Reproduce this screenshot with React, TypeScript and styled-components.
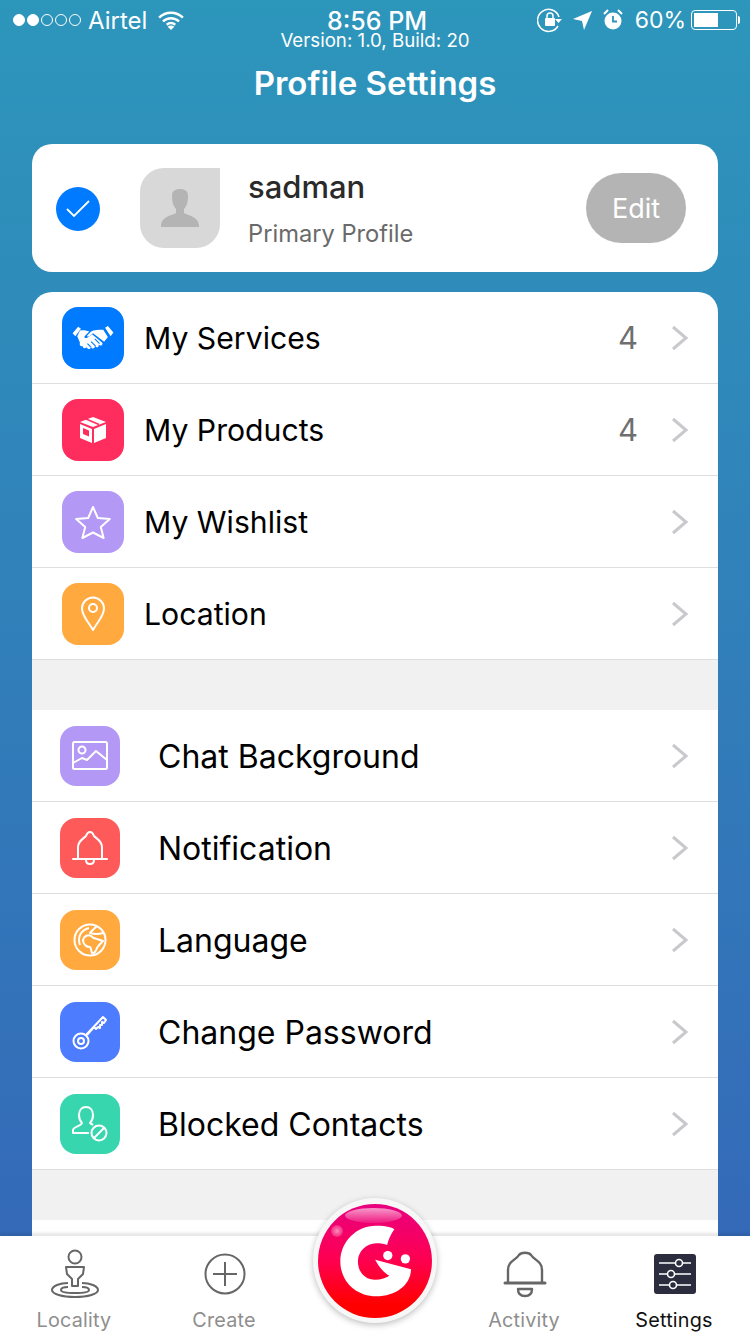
import React from 'react';
import styled, { createGlobalStyle } from 'styled-components';

const GlobalStyle = createGlobalStyle`
  html, body {
    margin: 0;
    padding: 0;
    background: #3566b8;
  }
  * {
    box-sizing: border-box;
  }
`;

const group1 = [
  { label: 'My Services', color: '#007aff', count: 4, icon: 'hands' },
  { label: 'My Products', color: '#ff2d5e', count: 4, icon: 'box' },
  { label: 'My Wishlist', color: '#b398f5', icon: 'star' },
  { label: 'Location', color: '#ffa93f', icon: 'pin' },
];

const group2 = [
  { label: 'Chat Background', color: '#b398f5', icon: 'image' },
  { label: 'Notification', color: '#ff5a5a', icon: 'bell' },
  { label: 'Language', color: '#ffa93f', icon: 'globe' },
  { label: 'Change Password', color: '#4e7cff', icon: 'key' },
  { label: 'Blocked Contacts', color: '#38d6ae', icon: 'blocked' },
];

const RowGlyph = ({ name }: { name: string }) => {
  switch (name) {
    case 'hands':
      return (
        <svg width="42" height="26" viewBox="0 0 44 28" fill="none">
          <path d="M0 9l6-7 3 2-6 8z M44 8l-6-7-3 2 6 9z" fill="#fff" />
          <path d="M8 6c4-1 7 0 10 1l-5 5c-1 2 2 3 4 1l4-3 11 9c1 3-2 4-4 2 1 3-2 4-4 2 0 3-3 3-4 1-1 3-4 2-5 0-2 2-4 1-4-1-3 0-4-2-3-4L5 12z" fill="#fff" />
          <path d="M20 7c3-2 8-2 13-2l5 8-4 5-12-9-4 3c-2 1-3 0-2-1z" fill="#fff" />
          <path d="M16 20l4 4M20 18l5 5M24 15l5 5" stroke="#007aff" strokeWidth="1.200" />
        </svg>
      );
    case 'box':
      return (
        <svg width="28" height="28" viewBox="0 0 28 28" fill="none">
          <path d="M14 1l13 5-13 5L1 6z" fill="#fff" />
          <path d="M7 3l13 5.500" stroke="#ff2d5e" strokeWidth="1.500" />
          <path d="M1 8l12 5v14L1 22z M15 13l12-5v14l-12 5z" fill="#fff" />
          <path d="M4 12l6 2.500v6L4 18z" fill="#ff2d5e" />
        </svg>
      );
    case 'star':
      return (
        <svg width="36" height="34" viewBox="0 0 36 34" fill="none" stroke="#fff" strokeWidth="2" strokeLinejoin="round">
          <path d="M18 2l4.800 11 12 1-9 8 2.800 11L18 27.500 7.400 33 10.200 22l-9-8 12-1z" />
        </svg>
      );
    case 'pin':
      return (
        <svg width="26" height="36" viewBox="0 0 26 36" fill="none" stroke="#fff" strokeWidth="2">
          <path d="M13 34C8 25 2 20 2 12.500a11 11 0 0 1 22 0C24 20 18 25 13 34z" strokeLinejoin="round" />
          <circle cx="13" cy="12" r="4" />
        </svg>
      );
    case 'image':
      return (
        <svg width="36" height="30" viewBox="0 0 36 30" fill="none" stroke="#fff" strokeWidth="2" strokeLinejoin="round">
          <rect x="1" y="1" width="34" height="27" rx="1.500" />
          <circle cx="10" cy="9" r="3.500" />
          <path d="M1 22l9-5 5 2 9-9 11 9" />
        </svg>
      );
    case 'bell':
      return (
        <svg width="36" height="36" viewBox="0 0 36 36" fill="none" stroke="#fff" strokeWidth="2" strokeLinejoin="round">
          <path d="M6 29V17C6 11 11 9 14 6c1-3 3-4 4-4s3 1 4 4c3 3 8 5 8 11v12" />
          <path d="M1 29h34" strokeLinecap="round" />
          <path d="M14 30c0 3 2 4 4 4s4-1 4-4" />
        </svg>
      );
    case 'globe':
      return (
        <svg width="34" height="34" viewBox="0 0 34 34" fill="none" stroke="#fff" strokeWidth="2" strokeLinejoin="round">
          <circle cx="17" cy="17" r="15.500" />
          <path d="M7 22C4 14 8 7 16 5" />
          <path d="M10 17C11 13 15 11 18 13C20 15 21 16 24 16L30 18C27 21 25 23 24 25C23 28 21 31 19 30C18 27 18 25 17 24C14 24 10 22 10 17Z" />
          <path d="M24 3C21 6 18 8 17 10C20 11 24 12 30 10" />
        </svg>
      );
    case 'key':
      return (
        <svg width="36" height="36" viewBox="0 0 36 36" fill="none" stroke="#fff" strokeWidth="2" strokeLinejoin="round">
          <circle cx="9" cy="27" r="7.500" />
          <circle cx="9" cy="27" r="3" />
          <path d="M14 21L31 3l3 3-2 3-2-1 0 3-2 0 0 3-2-1-2 2-2-2-7 8" />
        </svg>
      );
    case 'blocked':
      return (
        <svg width="36" height="36" viewBox="0 0 36 36" fill="none" stroke="#fff" strokeWidth="2" strokeLinejoin="round">
          <path d="M17 27H1v-3c0-3 8-4 9-7-2-2-3-5-3-8 0-5 3-8 7-8s7 3 7 8c0 3-1 6-3 8 1 1 2 1 3 2" />
          <circle cx="27" cy="27" r="7.500" />
          <path d="M22 32L32 22" />
        </svg>
      );
    default:
      return null;
  }
};

const Chevron = () => (
  <svg width="18" height="26" viewBox="0 0 18 26" fill="none">
    <path d="M2 2l13 11L2 24" stroke="#c9c9cd" strokeWidth="3" />
  </svg>
);

const App = () => {
  return (
    <>
      <GlobalStyle />
      <Page>
        <StatusBar>
          <StatusLeft>
            <Signal>
              <Dot $on />
              <Dot $on />
              <Dot />
              <Dot />
              <Dot />
            </Signal>
            <Carrier>Airtel</Carrier>
            <svg width="26" height="19" viewBox="0 0 27 20" fill="none">
              <path d="M1 7c7-7 18-7 25 0M5 11c5-4.500 12-4.500 17 0M9 14.500c3-2.500 6-2.500 9 0" stroke="#fff" strokeWidth="2.600" />
              <path d="M13.500 20l-3.500-3.500c2-1.500 5-1.500 7 0z" fill="#fff" />
            </svg>
          </StatusLeft>
          <Clock>8:56 PM</Clock>
          <StatusRight>
            <svg width="26" height="26" viewBox="0 0 26 26" fill="none">
              <path d="M21 19a11 11 0 1 1 1-9" stroke="#fff" strokeWidth="1.500" />
              <path d="M18 12h7l-3.500 4z" fill="#fff" />
              <rect x="8" y="11" width="10" height="8" rx="1" fill="#fff" />
              <path d="M10 11V9a3 3 0 0 1 6 0v2" stroke="#fff" strokeWidth="1.500" />
            </svg>
            <svg width="20" height="20" viewBox="0 0 20 20">
              <path d="M19 1L0 9l9 2 2 9z" fill="#fff" />
            </svg>
            <svg width="20" height="22" viewBox="0 0 20 22" fill="none">
              <circle cx="10" cy="12" r="8.500" fill="#fff" />
              <path d="M10 7v5.500h4" stroke="#2d92bb" strokeWidth="1.800" />
              <path d="M1 5l4-4M19 5l-4-4" stroke="#fff" strokeWidth="2" />
            </svg>
            <BatteryText>60%</BatteryText>
            <Battery>
              <BatteryFill style={{ width: '60%' }} />
            </Battery>
          </StatusRight>
        </StatusBar>
        <Version>Version: 1.0, Build: 20</Version>
        <Title>Profile Settings</Title>

        <ProfileCard>
          <CheckCircle>
            <svg width="26" height="20" viewBox="0 0 26 20" fill="none">
              <path d="M2 10l7 7L24 2" stroke="#fff" strokeWidth="1.800" />
            </svg>
          </CheckCircle>
          <Avatar>
            <svg width="40" height="40" viewBox="0 0 40 40">
              <path d="M12 8c0-5 3-7 8-7s8 2 8 7c0 5-1 10-4 13v4c2 2 15 3 15 13v1H1v-1c0-10 13-11 15-13v-4c-3-3-4-8-4-13z" fill="#b4b4b4" />
            </svg>
          </Avatar>
          <ProfileText>
            <ProfileName>sadman</ProfileName>
            <ProfileRole>Primary Profile</ProfileRole>
          </ProfileText>
          <EditButton>Edit</EditButton>
        </ProfileCard>

        <ListCard>
          {group1.map((item) => (
            <Row key={item.label} $indent={30}>
              <IconTile $color={item.color} $size={62}>
                <RowGlyph name={item.icon} />
              </IconTile>
              <RowLabel $gap={20} $size={30.2}>{item.label}</RowLabel>
              {item.count !== undefined && <RowCount>{item.count}</RowCount>}
              <Chevron />
            </Row>
          ))}
          <Spacer />
          {group2.map((item) => (
            <Row key={item.label} $indent={28}>
              <IconTile $color={item.color} $size={60}>
                <RowGlyph name={item.icon} />
              </IconTile>
              <RowLabel $gap={38} $size={32} $drop>{item.label}</RowLabel>
              <Chevron />
            </Row>
          ))}
          <Spacer />
          <ListTail />
        </ListCard>

        <TabBar>
          <Tab>
            <TabIcon>
              <svg width="50" height="50" viewBox="0 0 50 50" fill="none" stroke="#666" strokeWidth="2">
                <circle cx="25" cy="8" r="6.500" />
                <path d="M16 18h18l-1 7-5 5v7h-6v-7l-5-5z" strokeLinejoin="round" />
                <path d="M18 34c-8 0-16 3-16 7 0 4 10 7 23 7s23-3 23-7c0-4-8-7-16-7" />
                <path d="M18 38c-4 0-7 1-7 3 0 2 6 3 14 3s14-1 14-3c0-2-3-3-7-3" />
              </svg>
            </TabIcon>
            <TabLabel>Locality</TabLabel>
          </Tab>
          <Tab>
            <TabIcon>
              <svg width="42" height="42" viewBox="0 0 42 42" fill="none" stroke="#666" strokeWidth="2">
                <circle cx="21" cy="21" r="19.500" />
                <path d="M21 9v24M9 21h24" />
              </svg>
            </TabIcon>
            <TabLabel>Create</TabLabel>
          </Tab>
          <TabSlot />
          <Tab>
            <TabIcon>
              <svg width="44" height="48" viewBox="0 0 44 48" fill="none" stroke="#666" strokeWidth="2.400" strokeLinejoin="round">
                <path d="M5 32V20C5 11 13 10 16 5c2-3 10-3 12 0 3 5 11 6 11 15v12" />
                <path d="M2 33h40" strokeLinecap="round" strokeWidth="3" />
                <path d="M15 39h14c0 5-3 7-7 7s-7-2-7-7z" />
              </svg>
            </TabIcon>
            <TabLabel>Activity</TabLabel>
          </Tab>
          <Tab>
            <TabIcon>
              <SettingsTile>
                <svg width="32" height="32" viewBox="0 0 32 32" fill="none" stroke="#fff" strokeWidth="1.600">
                  <path d="M0 5h16M24 5h8M0 16h8M16 16h16M0 27h10M18 27h14" />
                  <circle cx="20" cy="5" r="3.500" />
                  <circle cx="12" cy="16" r="3.500" />
                  <circle cx="14" cy="27" r="3.500" />
                </svg>
              </SettingsTile>
            </TabIcon>
            <TabLabel $active>Settings</TabLabel>
          </Tab>
        </TabBar>

        <LogoButton>
          <LogoBall>
            <Gloss />
            <Spark />
            <LogoMark width="72" height="72" viewBox="117 105 215 217">
              <path
                d="M272 113C255 108 240 107 225 107C165 107 117 155 117 215C117 275 165 320 225 320C285 320 330 285 330 238L222 210C235 235 250 250 265 258C255 265 240 270 222 270C190 270 170 245 170 215C170 185 195 160 225 160C240 160 250 162 258 165C262 150 270 130 280 118Z"
                fill="#fff"
              />
              <circle cx="260" cy="197" r="14" fill="#fff" />
              <circle cx="313" cy="207" r="14" fill="#fff" />
            </LogoMark>
          </LogoBall>
        </LogoButton>
      </Page>
    </>
  );
};

const Page = styled.div`
  position: relative;
  width: 750px;
  height: 1334px;
  overflow: hidden;
  background: linear-gradient(180deg, #2d96bb 0%, #3566b8 100%);
  font-family: Inter, 'Liberation Sans', sans-serif;
  color: #000;
`;
const StatusBar = styled.div`
  height: 40px;
  padding: 0 13px;
  display: grid;
  grid-template-columns: 1fr auto 1fr;
  align-items: center;
  color: #fff;
  font-size: 23px;
`;
const StatusLeft = styled.div`
  display: flex;
  align-items: center;
  gap: 7px;
`;
const Carrier = styled.span`
  font-size: 24px;
  margin-right: 4px;
`;
const Signal = styled.div`
  display: flex;
  gap: 2px;
`;
const Dot = styled.i<{ $on?: boolean }>`
  width: 12px;
  height: 12px;
  border-radius: 50%;
  border: 1px solid #fff;
  background: ${(p) => (p.$on ? '#fff' : 'transparent')};
`;
const Clock = styled.div`
  font-weight: 500;
  font-size: 25px;
  line-height: 20px;
  margin: 2px 0 0 4px;
`;
const StatusRight = styled.div`
  display: flex;
  align-items: center;
  justify-content: flex-end;
  gap: 10px;
`;
const BatteryText = styled.span`
  margin-left: 2px;
`;
const Battery = styled.div`
  position: relative;
  width: 46px;
  height: 20px;
  margin-left: -5px;
  padding: 2px;
  border: 1px solid #fff;
  border-radius: 4px;
  &::after {
    content: '';
    position: absolute;
    right: -4px;
    top: 5px;
    width: 2px;
    height: 8px;
    background: #fff;
    border-radius: 0 2px 2px 0;
  }
`;
const BatteryFill = styled.div`
  height: 100%;
  background: #fff;
`;
const Version = styled.div`
  margin-top: -8px;
  text-align: center;
  color: #fff;
  font-size: 18.700px;
  line-height: 18px;
`;
const Title = styled.h1`
  margin: 0;
  padding-top: 10px;
  height: 94px;
  text-align: center;
  color: #fff;
  font-size: 33px;
  line-height: 46px;
  font-weight: 600;
`;
const ProfileCard = styled.div`
  width: 686px;
  height: 128px;
  margin: 0 auto 20px;
  padding: 0 32px 0 24px;
  display: flex;
  align-items: center;
  background: #fff;
  border-radius: 20px;
`;
const CheckCircle = styled.div`
  width: 44px;
  height: 44px;
  margin-top: 1px;
  border-radius: 50%;
  background: #007aff;
  display: flex;
  align-items: center;
  justify-content: center;
`;
const Avatar = styled.div`
  width: 80px;
  height: 80px;
  margin-left: 40px;
  background: #d8d8d8;
  border-radius: 24px 0 24px 24px;
  display: flex;
  align-items: center;
  justify-content: center;
`;
const ProfileText = styled.div`
  flex: 1;
  margin-left: 28px;
  margin-top: -1px;
`;
const ProfileName = styled.div`
  font-size: 31px;
  font-weight: 500;
  line-height: 38px;
  color: #2a2a2a;
`;
const ProfileRole = styled.div`
  margin-top: 14px;
  font-size: 23.700px;
  line-height: 28px;
  color: #6a6a6a;
`;
const EditButton = styled.div`
  width: 100px;
  height: 70px;
  border-radius: 35px;
  background: #b4b4b4;
  color: #fff;
  font-size: 27px;
  display: flex;
  align-items: center;
  justify-content: center;
`;
const ListCard = styled.div`
  width: 686px;
  margin: 0 auto;
  background: #fff;
  border-radius: 20px 20px 0 0;
  overflow: hidden;
`;
const Row = styled.div<{ $indent: number }>`
  height: 92px;
  padding: 0 29px 0 ${(p) => p.$indent}px;
  display: flex;
  align-items: center;
  border-bottom: 1px solid #dedede;
`;
const IconTile = styled.div<{ $color: string; $size: number }>`
  width: ${(p) => p.$size}px;
  height: ${(p) => p.$size}px;
  flex: none;
  border-radius: 16px;
  background: ${(p) => p.$color};
  display: flex;
  align-items: center;
  justify-content: center;
`;
const RowLabel = styled.div<{ $gap: number; $size: number; $drop?: boolean }>`
  flex: 1;
  margin-left: ${(p) => p.$gap}px;
  margin-top: ${(p) => (p.$drop ? 2 : 0)}px;
  font-size: ${(p) => p.$size}px;
`;
const RowCount = styled.div`
  margin-right: 33px;
  font-size: 31px;
  color: #6f6f6f;
`;
const Spacer = styled.div`
  height: 50px;
  background: #f1f1f1;
`;
const ListTail = styled.div`
  height: 20px;
  background: #fff;
`;
const TabBar = styled.div`
  position: absolute;
  left: 0;
  right: 0;
  bottom: 0;
  height: 98px;
  display: grid;
  grid-template-columns: repeat(5, 150px);
  background: #fff;
  box-shadow: 0 -3px 3px rgba(0, 0, 0, 0.1);
`;
const Tab = styled.div`
  display: flex;
  flex-direction: column;
  align-items: center;
`;
const TabSlot = styled.div``;
const TabIcon = styled.div`
  height: 64px;
  padding-top: 12px;
  display: flex;
  align-items: center;
  justify-content: center;
`;
const TabLabel = styled.div<{ $active?: boolean }>`
  font-size: 19.800px;
  line-height: 24px;
  letter-spacing: 0.2px;
  margin-top: 8px;
  margin-right: 2px;
  color: ${(p) => (p.$active ? '#111' : '#8e8e8e')};
`;
const SettingsTile = styled.div`
  width: 42px;
  height: 40px;
  border-radius: 3px;
  background: #2b2d3e;
  display: flex;
  align-items: center;
  justify-content: center;
`;
const LogoButton = styled.div`
  position: absolute;
  left: 313px;
  top: 1198px;
  width: 124px;
  height: 125px;
  border-radius: 50%;
  background: #f7f7f7;
  box-shadow: 0 2px 6px rgba(0, 0, 0, 0.25);
  display: flex;
  align-items: center;
  justify-content: center;
`;
const LogoBall = styled.div`
  position: relative;
  width: 114px;
  height: 114px;
  border-radius: 50%;
  background: linear-gradient(180deg, #e8007f 0%, #ff0050 50%, #ff0000 88%);
  display: flex;
  align-items: center;
  justify-content: center;
`;
const LogoMark = styled.svg`
  margin-left: 2px;
  margin-top: 1px;
`;
const Gloss = styled.div`
  position: absolute;
  left: 27px;
  top: 4px;
  width: 57px;
  height: 15px;
  border-radius: 50%;
  background: linear-gradient(180deg, rgba(255, 255, 255, 0.6), rgba(255, 255, 255, 0.1));
`;
const Spark = styled.div`
  position: absolute;
  left: 13px;
  top: 21px;
  width: 12px;
  height: 12px;
  border-radius: 50%;
  background: radial-gradient(circle, rgba(255, 255, 255, 0.55), rgba(255, 255, 255, 0));
`;

export default App;
